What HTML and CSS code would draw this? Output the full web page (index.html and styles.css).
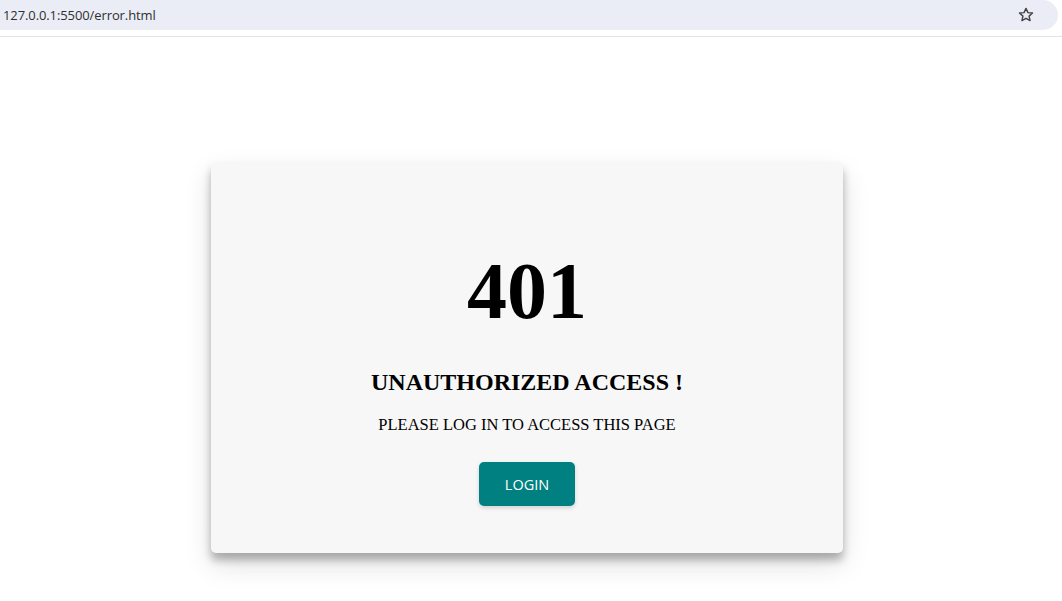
FILE: index.html
```html
<!DOCTYPE html>
<html lang="en">
<head>
<meta charset="utf-8">
<title>Error</title>
<link rel="stylesheet" href="styles.css">
</head>
<body>
<header class="browser-bar">
  <div class="omnibox">
    <span class="url">127.0.0.1:5500/error.html</span>
    <svg class="star" width="18" height="18" viewBox="0 0 24 24" aria-hidden="true">
      <path d="M12 3.2l2.6 5.6 6.1.6-4.6 4.1 1.3 6-5.4-3.1-5.4 3.1 1.3-6-4.6-4.1 6.1-.6z" fill="none" stroke="#444" stroke-width="1.9" stroke-linejoin="round"/>
    </svg>
  </div>
</header>
<main class="page">
  <section class="card">
    <h1 class="code">401</h1>
    <h2 class="title">UNAUTHORIZED ACCESS !</h2>
    <p class="message">PLEASE LOG IN TO ACCESS THIS PAGE</p>
    <button class="login-btn" type="button">LOGIN</button>
  </section>
</main>
</body>
</html>
```

FILE: styles.css
```css
* { box-sizing: border-box; }
html, body { margin: 0; padding: 0; background: #ffffff; }
html, body { height: 100%; }
body { font-family: "Liberation Serif", "Times New Roman", serif; color: #000; }

.browser-bar {
  height: 37px;
  border-bottom: 1px solid #e3e3e3;
}
.omnibox {
  height: 30px;
  margin-right: 4px;
  background: #eaedf6;
  border-radius: 0 15px 15px 0;
  display: flex;
  align-items: center;
  justify-content: space-between;
  padding: 0 23px 0 3px;
}
.url {
  font-family: "Open Sans", "Noto Sans", sans-serif;
  font-size: 13px;
  color: #2f2f2f;
  letter-spacing: -0.1px;
  line-height: 1;
}
.star { display: block; }

.page {
  display: flex;
  justify-content: center;
  align-items: flex-start;
  padding: 125px 8px 40px 0;
}
.card {
  width: 632px;
  height: 391px;
  background: #f7f7f7;
  border-radius: 5px;
  box-shadow: 0 7px 9px rgba(0,0,0,0.28), 0 12px 28px rgba(0,0,0,0.12);
  display: flex;
  flex-direction: column;
  align-items: center;
  padding-top: 84px;
}
.code {
  margin: 0;
  font-size: 80px;
  line-height: 90px;
  font-weight: bold;
}
.title {
  margin: 32px 0 0;
  font-size: 24px;
  line-height: 28px;
  font-weight: bold;
}
.message {
  margin: 19px 0 0;
  font-size: 16.5px;
  line-height: 20px;
}
.login-btn {
  margin-top: 27px;
  width: 96px;
  height: 44px;
  border: none;
  border-radius: 5px;
  background: #008080;
  color: #fff;
  font-family: "Open Sans", "Noto Sans", sans-serif;
  font-size: 14.5px;
  font-weight: 500;
  box-shadow: 0 2px 4px rgba(0,0,0,0.15);
  cursor: pointer;
}
```
